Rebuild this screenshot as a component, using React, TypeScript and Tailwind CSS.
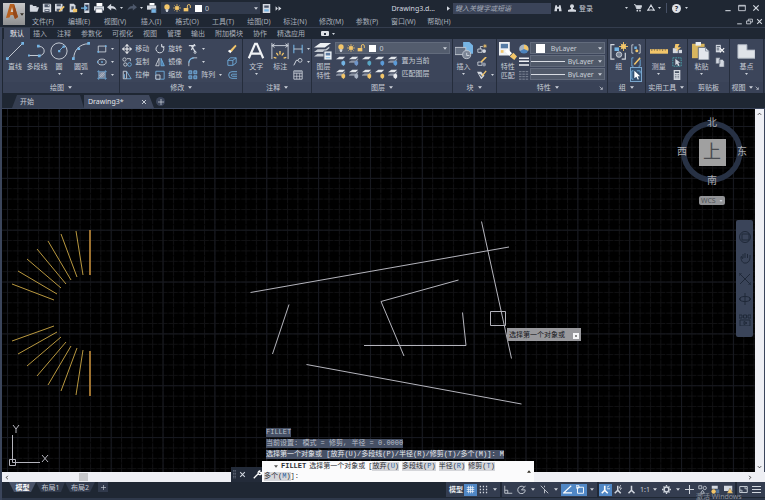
import { ReactNode } from 'react';

const W = '#d3d8e0';
const B = '#74b4e4';
const Y = '#f3c66a';
const G = '#8d95a5';

// Small icons are drawn on a 12 x 12 grid
const icons: Record<string, ReactNode> = {
    open: <><path d="M1 10V2h3l1 1.500h4V5" fill={W} /><path d="M1 10.500 3 5h9l-2 5.500z" fill={W} /></>,
    save: <><path d="M1 1h9l1 1v9H1z" fill={W} /><path d="M3 1.500h6V5H3zM3 7.500h6V11H3z" fill="#4b5567" /><path d="M7 2h1.300v2H7zM4 8.500h4v1H4z" fill={W} /></>,
    saveAs: <><path d="M0 1h9v9H0z" fill={W} /><path d="M2 1.500h5V4H2zM2 7h4v3H2z" fill="#4b5567" /><path d="m5 10 6-6" stroke={Y} strokeWidth="2" /></>,
    page: <><path d="M2 1h5l2 2v8H2z" fill={W} /><path d="M4 4h3v4H4z" fill="#4b5567" /><path d="M6 7h5v4H6z" fill={Y} /></>,
    phone: <><path d="M4 0h6v12H4z" fill={W} /><path d="M5 2h4v7H5z" fill="#35405a" /><path d="M0 6h6M4 3.500 7 6 4 8.500" stroke={B} strokeWidth="1.500" /></>,
    print: <><path d="M3 0h7v4H3z" fill="#fff" /><path d="M0 4h12v5H0z" fill={W} /><path d="M2 7h8v5H2z" fill="#fff" stroke="#4b5567" strokeWidth=".7" /></>,
    plot: <><path d="M3 0h6v3H3z" fill="#fff" /><path d="M0 3h11v5H0z" fill={W} /><path d="M5 7h6v5H5z" fill={B} stroke="#4b5567" strokeWidth=".7" /></>,
    undo: <path d="M0 5 5 1v2.500c4 0 6 2 6.500 5.500C10 7 8 6.500 5 6.500V9z" fill={W} />,
    redo: <path d="M12 5 7 1v2.500C3 3.500 1 5.500.5 9 2 7 4 6.500 7 6.500V9z" fill="#4d586b" />,
    bulb: <><circle cx="6" cy="4.500" r="4" fill={Y} /><path d="M4 8h4v1.500L7 12H5L4 10z" fill={W} /></>,
    sun: <><circle cx="6" cy="6" r="3" fill={Y} /><path d="M6 0v12M0 6h12M2 2l8 8M10 2l-8 8" stroke={Y} /></>,
    unlock: <><path d="M1 6h7v5H1z" fill={Y} /><path d="M6.500 6V3a2 2 0 0 1 4.500 0v3" stroke={Y} strokeWidth="1.400" /></>,
    sheet: <><path d="M1 0h10v12H1z" fill={W} /><path d="M3 2h6v3H3z" fill="#4b5567" /><path d="M3 7h6v3H3z" fill={B} /></>,
    forward: <path d="m1 2 4 4-4 4zM6 2l5 4-5 4z" fill={W} />,
    find: <path d="M2 2h2.500v2h3V2H10l1.500 9h-4V7h-3v4H.5z" fill={W} />,
    user: <><circle cx="6" cy="3.500" r="3" fill={W} /><path d="M4.500 6h3v1.500L12 9v2.500H0V9l4.500-1.500z" fill={W} /></>,
    cart: <><path d="M0 1h2l2 6h6l1.500-4.500H3" stroke={W} strokeWidth="1.400" /><path d="M3 3h8L9.500 7H4z" fill={W} /><circle cx="5" cy="10" r="1.300" fill={W} /><circle cx="9" cy="10" r="1.300" fill={W} /></>,
    a360: <path d="M6 1.500 10.500 9h-9zM0 9.500h4M8 9.500h4M5 2h2" stroke={W} strokeWidth="1.600" />,
    min: <path d="M2 10h8" stroke={W} strokeWidth="1.600" />,
    max: <path d="M1 2h10v8H1zM1 3h10" stroke={W} strokeWidth="1.300" />,
    restore: <path d="M1 5h7v5H1zM4 5V2h7v5H8" stroke={W} strokeWidth="1.400" />,
    close: <path d="m2 2 8 8M10 2l-8 8" stroke={W} strokeWidth="1.800" />,
    rect: <><path d="M1.500 2.500h9v7h-9z" stroke={W} /><path d="M.5 8.500h2v2h-2zM9.500 1.500h2v2h-2z" fill={B} /></>,
    ellipse: <><ellipse cx="6" cy="6" rx="5" ry="3.500" stroke={W} /><path d="M5 5h2v2H5zM0 5h1.500v2H0z" fill={B} /></>,
    hatch: <><path d="M2 2h8v8H2z" fill="#7d879b" /><path d="M0 2h12M0 10h12M2 0v12M10 0v12" stroke={B} strokeWidth=".7" /><path d="m3 7 4-4M3 9l6-6M5 9l4-4" stroke={W} strokeWidth=".7" /></>,
    move: <path d="M6 1v10M1 6h10M4 3l2-2.500L8 3M4 9l2 2.500L8 9M3 4 .5 6 3 8M9 4l2.500 2L9 8" stroke="#fff" strokeWidth="1.200" />,
    copy: <><circle cx="3" cy="3" r="2" stroke={W} /><circle cx="9" cy="9" r="2.200" stroke={B} /><circle cx="4" cy="9" r="2" stroke={W} /><path d="M6 2h4v3" stroke={W} /></>,
    stretch: <><path d="M1.500 1.500h4v9h-4z" stroke={W} /><path d="M5.500 1.500 11 10.500H5.500" stroke={B} /><path d="M3 5v5" stroke={B} /></>,
    rotate: <path d="M8.500 2A4.700 4.700 0 1 1 4 1.600M8 0v3.500h3.500" stroke={W} strokeWidth="1.200" />,
    mirror: <><path d="M4.800 1.500v9H.8z" stroke={W} /><path d="M7.200 1.500v9h4z" stroke={B} fill="#4b7ba8" /></>,
    scale: <><path d="M1 1.500h10v9.500H1z" stroke={B} /><path d="M1 6h5v5H1z" stroke={W} fill="#3c455a" /></>,
    trim: <><path d="M1 2h8M8 0 4 7M4 2l5 8" stroke={W} strokeWidth="1.500" /><circle cx="8.500" cy="10" r="1.300" stroke={W} /></>,
    fillet: <><path d="M1 11V7a6 6 0 0 1 6-6h4" stroke={W} /><path d="M1 7a6 6 0 0 1 6-6" stroke={B} strokeWidth="1.300" /></>,
    array: <path d="M1 1h3.500v3.500H1zM7 1h3.500v3.500H7zM1 7h3.500v3.500H1zM7 7h3.500v3.500H7z" stroke={B} fill="#56749a" />,
    erase: <><path d="m3 8 7-7 1.500 1.500-6 7z" fill={Y} /><path d="M1 8.500 3.500 7l2 2L4 11z" fill="#fff" /></>,
    explode: <path d="M1 4h6v6H1zM4 1h7v6M1 4l3-3M7 4l4-3M7 10l4-3" stroke={B} />,
    offset: <path d="M12 2H6a4 4 0 0 0 0 8h6M12 5H6.500a1.200 1.200 0 0 0 0 2.500H12" stroke={B} />,
    linear: <><path d="M1 1v10M11 1v10" stroke={B} strokeWidth="1.300" /><path d="M1 6h10" stroke={W} /></>,
    leader: <><path d="m1 10 3-6h2" stroke={W} strokeWidth="1.200" /><circle cx="8.500" cy="4" r="2.300" stroke={W} /></>,
    table: <><path d="M1 1h10v10H1z" stroke={W} /><path d="M1 4h10M1 7.500h10M4.500 4v7M8 4v7" stroke={W} strokeWidth=".8" /><path d="M1 1h10v2H1z" fill={G} /></>,
    blocks: <><path d="M1 10h5V6H1zM4 6V3h3" stroke={W} /><circle cx="8.500" cy="8.500" r="2.300" fill={W} /><path d="M9.500 0v5M7 2.500h5M8 1l3 3M11 1 8 4" stroke={Y} strokeWidth=".8" /></>,
    blockEdit: <><path d="M1 10h5V6H1z" stroke={W} /><circle cx="8.500" cy="9" r="2.300" fill={G} /><path d="m5 6 6-6" stroke={Y} strokeWidth="2" /></>,
    attr: <><path d="M0 2h5l4 5-4 4z" fill={W} /><path d="m3 5 3 3" stroke="#4b5567" strokeWidth="1.300" /><path d="m6 7 5-6" stroke={Y} strokeWidth="1.700" /></>,
    wheel: <><circle cx="6" cy="6" r="5.500" fill="#4c83bd" /><path d="M6 6V.5A5.500 5.500 0 0 1 11 8z" fill={Y} /><path d="M6 6 1 8.500A5.500 5.500 0 0 1 6 .5z" fill="#a9b5c2" /></>,
    weights: <path d="M0 1.500h12M0 5h12M0 9.500h12" stroke="#eef1f5" strokeWidth="1.900" />,
    types: <path d="M0 2h12M0 5h12M0 8h12M0 11h12" stroke={G} strokeDasharray="3 1" />,
    ungroup: <><path d="M3 1H1v10h2M9 1h2v10H9" stroke={W} /><path d="M4 3h3v3H4z" fill={B} /><circle cx="7" cy="8" r="1.800" fill={Y} /></>,
    groupEdit: <><path d="M3 1H1v10h2M9 3h2v8H9" stroke={B} /><path d="m4 9 7-8" stroke={Y} strokeWidth="1.800" /></>,
    pick: <><path d="M3 1H1v10h2M7 1h4v3" stroke={B} /><path d="M4 1v9l2.500-2L8 11.500 9.500 11 8 7.500h3z" fill="#fff" /></>,
    quick: <><path d="M1 5h6v6H1z" fill={W} /><path d="M4 0h5L7 4h4L5 9l1-4H3z" fill={Y} /><path d="M8 7h4v4H8z" fill={W} /></>,
    selAll: <><path d="M1 1h10v10H1z" stroke="#4fb3b8" strokeDasharray="2 1" /><path d="M4 2v8l2-2 1.500 3L9 10 7.500 7H10z" fill={W} /></>,
    calc: <><path d="M2 0h8v12H2z" fill={W} /><path d="M3.500 1.500h5v2h-5zM3.500 5h1v1h-1zM5.500 5h1v1h-1zM7.500 5h1v1h-1zM3.500 7h1v1h-1zM5.500 7h1v1h-1zM7.500 7h1v1h-1zM3.500 9h1v1h-1zM5.500 9h1v1h-1zM7.500 9h1v1h-1z" fill="#4b5567" /></>,
    cut: <><path d="M1 1h6v9H1z" fill={W} /><path d="m6 5 5 5M11 5l-5 5" stroke="#fff" strokeWidth="1.300" /><path d="M2 3h4M2 5h3M2 7h3" stroke="#4b5567" /></>,
    copyClip: <path d="M1 1h5v7H1zM5 3h4l2 2v7H5z" fill={W} stroke="#4b5567" strokeWidth=".6" />,
    grid: <path d="M1 3.500h10M1 8.500h10M3.500 1v10M8.500 1v10M6 1v10M1 6h10" stroke="#f2f6fb" strokeWidth="1" />,
    dots: <path d="M1 2h10M1 6h10M1 10h10" stroke={W} strokeWidth="1.700" strokeDasharray="1.700 2.400" />,
    ortho: <path d="M1 1v10h10M1 7h4v4" stroke={W} strokeWidth="1.100" />,
    polar: <path d="M9.500 3A5 5 0 1 0 11 7M6 6.500 11.500 1M6 6.500h5" stroke={W} strokeWidth="1.200" />,
    iso: <path d="m1 1 10 10M6 6v5M6 1v2" stroke={W} strokeWidth="1.100" />,
    otrack: <path d="M11 1 1 10.500h11" stroke="#fff" strokeWidth="1.400" />,
    osnap: <path d="M2 3h8v8H2zM0 1h4v3H0z" stroke="#fff" strokeWidth="1.200" />,
    anno: <><path d="M5 1v6L1 11M5 7l4 4" stroke="#fff" strokeWidth="2.200" /><path d="m8 3 3-2M8 5h4" stroke="#fff" /></>,
    anno2: <><path d="M5 1v6L1 11M5 7l4 4" stroke={W} strokeWidth="2" /><path d="M9 0 7 4h3L8 7" stroke={W} /></>,
    anno3: <path d="M6 1v6L2 11M6 7l4 4" stroke={W} strokeWidth="2" />,
    gear: <><circle cx="6" cy="6" r="3.200" stroke={W} strokeWidth="2" /><path d="M6 0v2M6 10v2M0 6h2M10 6h2M2 2l1 1M9 9l1 1M10 2 9 3M3 9l-1 1" stroke={W} strokeWidth="1.800" /></>,
    plus: <path d="M6 0v12M0 6h12" stroke={W} strokeWidth="1.400" />,
    isolate: <><path d="M1 1h4v4H1z" stroke={W} /><circle cx="9" cy="4" r="2.200" stroke={W} /><path d="m6 7 2.500 4h-5z" stroke={W} /></>,
    perf: <><path d="M1 1h8v4H1z" fill={W} /><circle cx="3.500" cy="8.500" r="3" fill={Y} /><path d="M7 6h4v5H7z" fill="#52749a" /></>,
    warn: <><path d="M0 1h11v7H0z" fill={W} /><path d="m8 4 4 7H4z" fill={Y} stroke="#4b5567" strokeWidth=".5" /></>,
    full: <path d="M1 2h10v8H1zM7 4h2.500v2M5 8H2.500V6" stroke={W} strokeWidth="1.200" />,
    menu: <path d="M0 2h12M0 6h12M0 10h12" stroke={W} strokeWidth="1.500" />,
    wrench: <path d="m1 11 6-6M7 5a3 3 0 0 1 2-4v2l1.500 1L12 3a3 3 0 0 1-4 3z" stroke="#fff" strokeWidth="1.700" />,
};

const Icon = ({ name, className = 'size-[10px]' }: { name: string; className?: string }) => (
    <svg viewBox="0 0 12 12" fill="none" className={`shrink-0 ${className}`} aria-hidden="true">{icons[name]}</svg>
);

const Caret = ({ className = 'h-[3px] w-[4px]' }: { className?: string }) => (
    <svg viewBox="0 0 6 4" className={`shrink-0 ${className}`} aria-hidden="true"><path d="M0 0h6L3 4z" fill="#cdd2da" /></svg>
);

// A stack of layers with a small badge that tells the commands apart
const LayerIcon = ({ badge, open }: { badge: string; open?: boolean }) => (
    <svg viewBox="0 0 12 12" className="size-[10px] shrink-0" aria-hidden="true">
        <path d="m0 4 4-3h7L8 4z" fill="#e1e5ea" />
        {!open && <path d="m0 7 3-1.500h5l3-3v2L8 8H0z" fill={G} />}
        <path d="M6.500 7 9 5.500 11 7v3l-2 2-2.500-2z" fill={badge} />
    </svg>
);

// Large ribbon icons use a 20 x 20 grid
const big: Record<string, ReactNode> = {
    line: <><path d="m2 18 16-16" stroke={W} /><path d="M0 17h3v3H0zM17 0h3v3h-3z" fill={B} /></>,
    pline: <><path d="M1 15h12a5 5 0 0 0 0-10h-1" stroke={W} /><path d="M0 14h2v2H0zM10 3h3v3h-3zM11 14h3v3h-3z" fill={B} /></>,
    circle: <><circle cx="10" cy="10" r="9" stroke={W} /><path d="m10 10 5-5" stroke={B} /><path d="M9 9h2.500v2.500H9zM14 4h2.500v2.500H14z" fill={B} /></>,
    arc: <><path d="M2 18C2 9 9 2 18 2" stroke={W} /><path d="M0 17h3v3H0zM17 0h3v3h-3zM6 6h3v3H6z" fill={B} /></>,
    text: <path d="m2 18 7-16h2l7 16M5 13h10" stroke="#f0f2f5" strokeWidth="2.400" />,
    dim: <><path d="M1 1v18M19 1v18M1 4h18M1 4l3-2M1 4l3 2M19 4l-3-2M19 4l-3 2" stroke={W} /><path d="M10 10v4M6 12l2 3M14 12l-2 3M3 17l3 1M17 17l-3 1" stroke={Y} strokeWidth="1.500" /></>,
    layers: <><path d="m0 6 7-5h12l-7 5z" fill="#edf0f3" /><path d="m0 11 4-3h9l4-3v2l-5 4zM0 16l4-3h9l4-3v2l-5 4z" fill="#c2c8d0" /><path d="M11 10h9v10h-9z" fill="#eef2f6" stroke="#435068" /><path d="M13 12h5v3h-5z" fill="#5f7da3" /><path d="M13 17.500h5" stroke={B} /></>,
    insert: <><path d="M9 0h7l4 4v9H9z" fill="#77b5e5" /><path d="M0 6h12v8H0z" fill="#677183" stroke="#c4cad3" /><circle cx="13" cy="14" r="4.500" fill="#7b8596" stroke="#c4cad3" /><path d="M13 12v3h3" stroke={W} /></>,
    match: <><path d="M0 0h12v15H0z" fill="#edf0f3" /><path d="M2 2h8v5H2z" fill="#557ba5" /><path d="M2 9h3v3H2z" fill={Y} /><path d="m8 9 5 5" stroke="#fff" strokeWidth="4" /><path d="m12 16 4-4 4 4-3 4z" fill={Y} /></>,
    group: <><path d="M5 3H1v16h4M13 19h4v-7" stroke={W} strokeWidth="1.300" /><path d="M5 6h5v4H5z" fill={B} /><circle cx="10" cy="14" r="3" fill="#7b8596" stroke={W} /><circle cx="15" cy="5" r="2.800" fill={Y} /><path d="M15 0v10M10 5h10M12 2l6 6M18 2l-6 6" stroke={Y} /></>,
    measure: <><path d="M0 8h20v5H0z" fill={Y} /><path d="M2 8v2M5 8v1.500M8 8v2M11 8v1.500M14 8v2M17 8v1.500" stroke="#7e6b45" /></>,
    paste: <><path d="M0 2h14v16H0z" fill="#d9b65e" /><path d="M4 0h6v4H4z" fill="#e9edf1" /><path d="M7 6h8l4 4v10H7z" fill="#e3e7ec" stroke="#5c6678" /><path d="M15 6v4h4" stroke="#8b94a3" /></>,
    base: <path d="M1 3h10v6h9v9H1z" fill="#dfe3e8" stroke="#b1b8c3" />,
};

const BigButton = ({ icon, label, caret, width = 'w-[22px]' }: { icon: string; label: string; caret?: boolean; width?: string }) => (
    <button className={`flex shrink-0 flex-col items-center ${width}`}>
        <svg viewBox="0 0 20 20" fill="none" className="size-[18px]" aria-hidden="true">{big[icon]}</svg>
        <span className="mt-[2px] whitespace-pre text-center leading-[9px]">{label}</span>
        {caret && <Caret className="mt-[2px] h-[2px] w-[3px]" />}
    </button>
);

const Small = ({ icon, label, caret, active }: { icon: string; label?: string; caret?: boolean; active?: boolean }) => (
    <button aria-label={label ?? icon} className={`flex h-[13px] items-center gap-[3px] ${active ? 'bg-[#34506f] outline outline-[#7ba6cc]' : ''}`}>
        <Icon name={icon} />
        {label}
        {caret && <Caret className="ml-px h-[2px] w-[3px]" />}
    </button>
);

const Panel = ({ title, caret, corner, children }: { title: string; caret?: boolean; corner?: boolean; children: ReactNode }) => (
    <section className="flex min-w-0 flex-col border-r border-[#252d3c] bg-[#3c455a]">
        <div className="flex h-[43px] pt-[3px]">{children}</div>
        <div className="flex h-[11px] items-center bg-[#394257]">
            <h2 className="flex flex-1 items-center justify-center gap-1 whitespace-nowrap">{title}{caret && <Caret />}</h2>
            {corner && <svg viewBox="0 0 6 6" className="mr-1 size-[4px]" aria-hidden="true"><path d="m1 1 4 4V2M5 5H2" stroke={W} fill="none" /></svg>}
        </div>
    </section>
);

const LayerState = () => (
    <span className="pointer-events-none flex items-center gap-[2px]">
        <Icon name="bulb" className="size-[8px]" />
        <Icon name="sun" className="size-[8px]" />
        <Icon name="unlock" className="size-[8px]" />
        <i className="ml-[2px] size-[7px] bg-white" />
    </span>
);

const Picker = ({ label, value, lead, className }: { label: string; value: string; lead: ReactNode; className: string }) => (
    <label className={`flex items-center gap-[3px] ${className}`}>
        {lead}
        <select aria-label={label} className="min-w-0 flex-1 appearance-none bg-transparent outline-none">
            <option>{value}</option>
        </select>
        <Caret className="mr-[2px] h-[3px] w-[4px]" />
    </label>
);

const TitleBar = () => (
    <div className="flex h-4 items-center">
        <div className="flex items-center gap-[3px] pl-1">
            {['open', 'save', 'saveAs', 'page', 'phone', 'print', 'undo'].map((n) => (
                <button key={n} aria-label={n} className="flex"><Icon name={n} /></button>
            ))}
            <Caret className="h-[2px] w-[3px]" />
            <button aria-label="redo" className="ml-px flex"><Icon name="redo" /></button>
            <Caret className="h-[2px] w-[3px]" />
            <button aria-label="plot" className="ml-px flex"><Icon name="plot" /></button>
        </div>
        <Picker label="图层" value="0" className="ml-1 h-[12px] w-[99px] bg-[#323b4d] pl-[2px]" lead={<LayerState />} />
        <button aria-label="sheet" className="ml-[2px] flex"><Icon name="sheet" className="size-[9px]" /></button>
        <button aria-label="more" className="ml-1 flex"><Icon name="forward" className="size-[7px]" /></button>
        <div className="flex flex-1 items-center justify-end text-[#d5d9e0]">
            <h1>Drawing3.d...</h1>
            <svg viewBox="0 0 4 6" className="mr-[3px] ml-3 h-[5px] w-[3px]" aria-hidden="true"><path d="m0 0 4 3-4 3z" fill={W} /></svg>
        </div>
        <input type="search" aria-label="搜索" placeholder="键入关键字或短语" className="h-[11px] w-[98px] bg-[#3b4459] px-[2px] italic outline-none placeholder:text-[#a4abb8]" />
        <button aria-label="查找" className="ml-[3px] flex"><Icon name="find" className="size-[8px]" /></button>
        <button className="ml-[6px] flex items-center gap-[3px]"><Icon name="user" className="size-[8px]" />登录</button>
        <Caret className="ml-8 h-[2px] w-[3px]" />
        <button aria-label="cart" className="ml-[6px] flex"><Icon name="cart" className="size-[8px]" /></button>
        <button aria-label="A360" className="ml-[5px] flex"><Icon name="a360" className="size-[8px]" /></button>
        <Caret className="ml-[3px] h-[2px] w-[3px]" />
        <i className="ml-[5px] h-[10px] w-px bg-[#465065]" />
        <button aria-label="帮助" className="ml-[5px] flex size-[9px] items-center justify-center rounded-full bg-[#dde1e7] font-bold text-[#1f2733]">?</button>
        <Caret className="ml-[4px] h-[2px] w-[3px]" />
        <div className="ml-9 flex gap-[6px] pr-[5px]">
            {['min', 'max', 'close'].map((n) => <button key={n} aria-label={n} className="flex"><Icon name={n} className="size-[8px]" /></button>)}
        </div>
    </div>
);

const menus = ['文件(F)', '编辑(E)', '视图(V)', '插入(I)', '格式(O)', '工具(T)', '绘图(D)', '标注(N)', '修改(M)', '参数(P)', '窗口(W)', '帮助(H)'];
const tabs = ['插入', '注释', '参数化', '可视化', '视图', '管理', '输出', '附加模块', '协作', '精选应用'];

const Ribbon = () => (
    <div className="grid shrink-0 grid-cols-[117fr_123fr_69fr_140fr_44fr_111fr_38fr_42fr_42fr_34fr] overflow-hidden border-r border-[#2f384a] pl-px">
        <Panel title="绘图" caret>
            <div className="flex pl-px">
                <BigButton icon="line" label="直线" />
                <BigButton icon="pline" label="多段线" />
                <BigButton icon="circle" label="圆" caret />
                <BigButton icon="arc" label="圆弧" caret />
            </div>
            <div className="ml-[5px]">
                <Small icon="rect" caret />
                <Small icon="ellipse" caret />
                <Small icon="hatch" caret />
            </div>
        </Panel>
        <Panel title="修改" caret>
            <div className="ml-[2px] w-[33px]">
                <Small icon="move" label="移动" />
                <Small icon="copy" label="复制" />
                <Small icon="stretch" label="拉伸" />
            </div>
            <div className="w-[33px]">
                <Small icon="rotate" label="旋转" />
                <Small icon="mirror" label="镜像" />
                <Small icon="scale" label="缩放" />
            </div>
            <div className="w-[39px]">
                <Small icon="trim" caret />
                <Small icon="fillet" caret />
                <Small icon="array" label="阵列" caret />
            </div>
            <div>
                <Small icon="erase" />
                <Small icon="explode" />
                <Small icon="offset" />
            </div>
        </Panel>
        <Panel title="注释" caret>
            <div className="flex pl-[2px]">
                <BigButton icon="text" label="文字" caret />
                <BigButton icon="dim" label="标注" width="w-[26px]" />
            </div>
            <div>
                <Small icon="linear" caret />
                <Small icon="leader" caret />
                <Small icon="table" />
            </div>
        </Panel>
        <Panel title="图层" caret>
            <BigButton icon="layers" label={'图层\n特性'} />
            <div className="flex min-w-0 flex-1 flex-col pl-px">
                <Picker label="当前图层" value="0" className="mr-[2px] h-[12px] border border-[#626b7c] bg-[#535c6d] pl-px" lead={<LayerState />} />
                <div className="flex h-[13px] items-center gap-[3px] pl-px">
                    <LayerIcon badge={B} open /><LayerIcon badge="#6f95c9" /><LayerIcon badge="#58a6c4" open /><LayerIcon badge="#5b9bd8" open /><LayerIcon badge="#5b9bd8" />
                    <button>置为当前</button>
                </div>
                <div className="flex h-[13px] items-center gap-[3px] pl-px">
                    <LayerIcon badge={Y} /><LayerIcon badge="#a9b3c4" /><LayerIcon badge={Y} /><LayerIcon badge={Y} open /><LayerIcon badge="#e8ebef" />
                    <button>匹配图层</button>
                </div>
            </div>
        </Panel>
        <Panel title="块" caret>
            <BigButton icon="insert" label="插入" caret />
            <div className="pl-[2px]">
                <Small icon="blocks" />
                <Small icon="blockEdit" />
                <Small icon="attr" caret />
            </div>
        </Panel>
        <Panel title="特性" caret corner>
            <BigButton icon="match" label={'特性\n匹配'} />
            <div>
                <Small icon="wheel" />
                <Small icon="weights" />
                <Small icon="types" />
            </div>
            <div className="mr-[2px] ml-px flex min-w-0 flex-1 flex-col gap-px">
                <Picker label="颜色" value="ByLayer" className="h-[12px] border border-[#626b7c] bg-[#505969]" lead={<i className="mr-[3px] ml-[5px] size-[9px] bg-white" />} />
                <Picker label="线宽" value="ByLayer" className="h-[12px] border border-[#626b7c] bg-[#505969]" lead={<i className="h-px w-[34px] bg-[#d8dce3]" />} />
                <Picker label="线型" value="ByLayer" className="h-[12px] border border-[#626b7c] bg-[#505969]" lead={<i className="h-px w-[34px] bg-[#d8dce3]" />} />
            </div>
        </Panel>
        <Panel title="组" caret>
            <BigButton icon="group" label="组" />
            <div className="pl-px">
                <Small icon="ungroup" />
                <Small icon="groupEdit" />
                <Small icon="pick" active />
            </div>
        </Panel>
        <Panel title="实用工具" caret>
            <BigButton icon="measure" label="测量" caret width="w-[26px]" />
            <div>
                <Small icon="quick" />
                <Small icon="selAll" />
                <Small icon="calc" />
            </div>
        </Panel>
        <Panel title="剪贴板">
            <BigButton icon="paste" label="粘贴" caret width="w-[27px]" />
            <div>
                <Small icon="cut" />
                <Small icon="copyClip" />
            </div>
        </Panel>
        <Panel title="视图" caret corner>
            <BigButton icon="base" label="基点" caret width="w-full" />
        </Panel>
    </div>
);

const rays = [
    [76, 231, 83, 275], [61, 234, 77, 277], [48, 241, 71, 280], [37, 249, 66, 284], [27, 259, 61, 288], [18, 271, 57, 294], [12, 284, 54, 300],
    [12, 341, 54, 326], [18, 354, 57, 332], [27, 366, 61, 337], [37, 376, 66, 342], [48, 385, 71, 346], [61, 391, 77, 348], [76, 395, 83, 350],
];

const Drawing = () => (
    <svg className="absolute inset-0 h-full w-full" aria-label="图形">
        <defs>
            <pattern id="minor" width="10.370" height="10.370" patternUnits="userSpaceOnUse" x="5" y="17">
                <path d="M.5 0v10.370M0 .5h10.370" stroke="#111113" strokeDasharray="5 1" />
            </pattern>
            <pattern id="major" width="51.850" height="51.850" patternUnits="userSpaceOnUse" x="5" y="17">
                <path d="M.5 0v51.850M0 .5h51.850" stroke="#171920" />
            </pattern>
        </defs>
        <rect width="100%" height="100%" fill="url(#minor)" />
        <rect width="100%" height="100%" fill="url(#major)" />
        <g transform="translate(-2 -109)" fill="none">
            <g stroke="#b9983f">
                {rays.map(([x1, y1, x2, y2]) => <line key={`${x1}-${y1}`} x1={x1} y1={y1} x2={x2} y2={y2} />)}
            </g>
            <path d="M90 230v45M90 351v45" stroke="#9c7130" strokeWidth="2" />
            <g stroke="#b4b4bc">
                <path d="m250.500 292.500 258.500-45.500M481.500 221.500l30 137M458.500 280 381 301.500l23 54.500M364 345.500h102l-3.500-33M289 304.500 272.500 354M306.500 364.500l215 39.500" />
                <path d="M490.500 311.500h15v14h-15z" />
                <path d="M12.500 435v27.500H40M9.500 459.500h6v6h-6zM13 425l3 4 3-4M16 429v4M42 455l6 7M48 455l-6 7" />
            </g>
            <circle cx="711.700" cy="151.700" r="28" stroke="#273144" strokeWidth="5.500" />
        </g>
    </svg>
);

const ViewCube = () => (
    <div className="absolute top-[8px] right-[8px] flex w-[70px] flex-col items-center font-['Liberation_Serif','Noto_Sans_CJK_SC',serif] text-[10px] text-[#a9abb0]">
        <button className="h-[12px]">北</button>
        <div className="flex h-[46px] w-full items-center justify-between">
            <button>西</button>
            <button className="size-[27px] bg-[#a0a0a0] text-[18px] text-[#4a4c50]">上</button>
            <button>东</button>
        </div>
        <button className="h-[12px]">南</button>
        <button className="mt-[9px] flex h-[9px] w-[26px] items-center gap-[3px] rounded-[2px] bg-[#929396] pl-[2px] font-['Noto_Sans',sans-serif] text-[7px] text-[#505358]">WCS<Caret className="h-[2px] w-[4px]" /></button>
    </div>
);

const NavBar = () => (
    <div className="absolute top-[111px] right-[2px] flex h-[117px] w-[17px] flex-col items-center justify-between rounded-[2px] bg-[#3a4459] py-[11px]">
        {[
            <><path d="M3 3h7v6H3z" /><circle cx="6" cy="6" r="5.500" /></>,
            <path d="M2 5c0 9 9 7 9 1V3M4 6V2M6 6V1M8.500 6V2M2 4l2 3" />,
            <path d="m1 1 10 10M11 1 1 11M0 3V0h3M9 12h3V9" />,
            <><path d="M6 0v12M2 4l-2 2 2 2M10 4l2 2-2 2" /><ellipse cx="6" cy="6" rx="5" ry="2.500" /></>,
            <path d="M0 1h3v3H0zM4.500 1h3v3h-3zM9 1h3v3H9zM1 6h10v6H1zM5 7.500v3L8 9z" />,
        ].map((shape, i) => (
            <button key={i} aria-label={`导航 ${i + 1}`} className="flex">
                <svg viewBox="0 0 12 12" className="size-[12px]" fill="none" stroke="#1f2838" aria-hidden="true">{shape}</svg>
            </button>
        ))}
    </div>
);

const Key = ({ text, k }: { text: string; k: string }) => (
    <button className="bg-[#d5d6da] leading-[9px]">{text}(<span className="text-[#2b5f9e]">{k}</span>)</button>
);

const CommandLine = () => (
    <div className="absolute bottom-0 left-[229px] z-10 flex items-end font-['Liberation_Mono','Noto_Sans_CJK_SC',monospace]">
        <div className="flex h-[15px] w-[31px] items-center gap-[3px] bg-[#232b39] pl-[2px]">
            <svg viewBox="0 0 4 12" className="h-[11px] w-[4px]" aria-hidden="true"><path d="M1 0v12M3 0v12" stroke="#9aa2b0" strokeDasharray="1 1" /></svg>
            <button aria-label="关闭" className="flex"><Icon name="close" className="size-[7px]" /></button>
            <button aria-label="自定义" className="ml-1 flex"><Icon name="wrench" className="size-[9px]" /></button>
        </div>
        <div>
            <div className="mb-[2px] ml-1 flex flex-col items-start gap-[2px] leading-[9px] whitespace-pre text-[#b9bec8]">
                <p className="bg-[#465065]">FILLET</p>
                <p className="bg-[#465065]">当前设置: 模式 = 修剪, 半径 = 0.0000</p>
                <p className="bg-[#465065] text-[#e7e9ed]">选择第一个对象或 [放弃(U)/多段线(P)/半径(R)/修剪(T)/多个(M)]: M</p>
            </div>
            <div className="flex h-[21px] w-[272px] items-center bg-[#fbfbfc] pl-[2px] text-[#2c2f36]">
                <div className="flex flex-1 flex-wrap items-center gap-x-[3px] gap-y-px leading-[9px]">
                    <svg viewBox="0 0 6 4" className="ml-[10px] h-[3px] w-[4px]" aria-hidden="true"><path d="M0 0h6L3 4z" fill="#555" /></svg>
                    <b>FILLET</b>
                    <span>选择第一个对象或</span>
                    <span className="flex">[<Key text="放弃" k="U" /></span>
                    <Key text="多段线" k="P" />
                    <Key text="半径" k="R" />
                    <Key text="修剪" k="T" />
                    <span className="flex"><Key text="多个" k="M" />]:</span>
                </div>
                <button aria-label="历史记录" className="flex pr-[3px]"><Caret className="h-[3px] w-[4px] rotate-180 invert" /></button>
            </div>
        </div>
    </div>
);

const StatusButton = ({ icon, on, caret }: { icon: string; on?: boolean; caret?: boolean }) => (
    <>
        <button aria-label={icon} aria-pressed={on} className={`flex h-[12px] w-[13px] items-center justify-center ${on ? 'bg-[#5087c5]' : ''}`}>
            <Icon name={icon} className="size-[9px]" />
        </button>
        {caret && <Caret className="mx-[3px] h-[3px] w-[4px]" />}
    </>
);

const StatusBar = () => (
    <div className="flex h-[15px] items-center bg-[#343d50] px-[2px]">
        <button className="px-px font-bold text-[#e6e8ec]">模型</button>
        <StatusButton icon="grid" on />
        <StatusButton icon="dots" caret />
        <i className="h-full w-[2px] bg-[#202836]" />
        <StatusButton icon="ortho" />
        <StatusButton icon="polar" caret />
        <StatusButton icon="iso" caret />
        <StatusButton icon="otrack" on />
        <StatusButton icon="osnap" on caret />
        <i className="h-full w-[2px] bg-[#202836]" />
        <StatusButton icon="anno" on />
        <StatusButton icon="anno2" />
        <StatusButton icon="anno3" />
        <button className="flex items-center gap-[3px] pl-[2px]">1:1<Caret className="mr-[3px] h-[3px] w-[4px]" /></button>
        <StatusButton icon="gear" caret />
        <StatusButton icon="plus" />
        <StatusButton icon="isolate" />
        <StatusButton icon="perf" />
        <StatusButton icon="warn" />
        <i className="h-full w-[2px] bg-[#202836]" />
        <StatusButton icon="full" />
        <StatusButton icon="menu" />
    </div>
);

const App = () => {
    return (
        <div className="relative flex h-screen flex-col overflow-hidden bg-[#1f2733] font-['Noto_Sans','Noto_Sans_CJK_SC',sans-serif] text-[7px] leading-none whitespace-nowrap text-[#c8cdd6]">
            {/* Title and menus */}
            <header className="flex h-[27px] shrink-0">
                <button aria-label="应用程序" className="mt-[3px] ml-[3px] flex h-[22px] w-[22px] bg-gradient-to-b from-[#c8c8c9] to-[#8f9091] pt-px pl-[3px]">
                    <svg viewBox="0 0 12 15" className="h-[15px] w-[12px]" aria-hidden="true">
                        <path d="M4 0h4l4 13-3 2-1.500-4H4.500L3.500 13.500 0 14z" fill="#b8611f" />
                        <path d="M6 3 4.700 8h2.600z" fill="#d3cdc8" />
                        <path d="M8 0 12 13l-3 2-2-5z" fill="#94481a" />
                    </svg>
                    <Caret className="mt-[9px] ml-[2px] h-[3px] w-[4px] invert" />
                </button>
                <div className="min-w-0 flex-1">
                    <TitleBar />
                    <nav className="flex h-[11px] items-center gap-3 pl-[6px] text-[#a9afba]">
                        {menus.map((m) => <button key={m} className="w-6">{m}</button>)}
                        <div className="ml-auto flex gap-[3px] pr-[2px]">
                            {['min', 'restore', 'close'].map((n) => <button key={n} aria-label={`图形 ${n}`} className="flex"><Icon name={n} className="size-[7px]" /></button>)}
                        </div>
                    </nav>
                </div>
            </header>

            <div className="flex min-h-0 flex-1 flex-col border-l-2 border-[#3b455b]">
                {/* Ribbon */}
                <div className="flex h-[12px] shrink-0 items-center gap-[10px] border-t border-[#343d4e] pl-[2px] text-[#a9afba]">
                    <button className="-mr-[7px] h-full bg-[#3c455a] px-[6px] text-[#eceef1]">默认</button>
                    {tabs.map((t) => <button key={t}>{t}</button>)}
                    <button aria-label="显示" className="ml-[6px] flex items-center gap-[3px]"><i className="flex h-[5px] w-[8px] items-center justify-center rounded-[1px] bg-[#dde0e5]"><i className="size-[2px] bg-[#2b3342]" /></i><Caret className="h-[2px] w-[3px]" /></button>
                </div>
                <Ribbon />

                {/* Open files */}
                <div className="flex h-4 shrink-0 items-end border-b border-[#3b455b] pl-[10px]">
                    <button className="h-[13px] w-[72px] bg-[#353e51] pl-2 text-left [clip-path:polygon(5px_0,68px_0,100%_100%,0_100%)]">开始</button>
                    <div className="flex h-[13px] w-[70px] items-center justify-between bg-[#3f485d] pr-[7px] pl-[4px] text-[#e3e6ea] [clip-path:polygon(0_0,65px_0,100%_100%,0_100%)]">
                        <button>Drawing3*</button>
                        <button aria-label="关闭图形" className="flex"><Icon name="close" className="size-[6px]" /></button>
                    </div>
                    <button aria-label="新图形" className="mb-[2px] ml-[2px] flex size-[9px] items-center justify-center rounded-full bg-[#3b455b]"><Icon name="plus" className="size-[6px]" /></button>
                </div>

                {/* Model space */}
                <main className="relative flex min-h-0 flex-1 flex-col">
                    <div className="flex min-h-0 flex-1">
                        <div className="relative flex-1 overflow-hidden bg-black">
                            <Drawing />
                            <ViewCube />
                            <NavBar />
                            <div className="absolute top-[219px] left-[505px] flex h-[13px] w-[74px] items-center justify-between bg-[#98989c] px-[2px] text-[#15161a]">
                                选择第一个对象或
                                <i className="mt-[3px] flex size-[6px] items-center justify-center bg-[#f4f4f6]"><i className="size-[2px] bg-[#888]" /></i>
                            </div>
                        </div>
                        <div className="flex w-[10px] flex-col items-center justify-between border-r border-[#3b455b] bg-[#eeeff4] py-[3px]">
                            <svg viewBox="0 0 6 4" className="h-[4px] w-[5px]" aria-hidden="true"><path d="m1 3 2-2 2 2" stroke="#333" fill="none" /></svg>
                            <svg viewBox="0 0 6 4" className="h-[4px] w-[5px]" aria-hidden="true"><path d="m1 1 2 2 2-2" stroke="#333" fill="none" /></svg>
                        </div>
                    </div>
                    <div className="flex h-[10px] items-center bg-[#eeeff4] pr-[13px] pl-[3px]">
                        <svg viewBox="0 0 4 6" className="h-[5px] w-[4px]" aria-hidden="true"><path d="M3 1 1 3l2 2" stroke="#222" fill="none" /></svg>
                        <i className="ml-[70px] h-[8px] w-[9px] bg-[#c6c7ca]" />
                        <svg viewBox="0 0 4 6" className="ml-auto h-[5px] w-[4px]" aria-hidden="true"><path d="m1 1 2 2-2 2" stroke="#222" fill="none" /></svg>
                    </div>
                    <CommandLine />
                </main>

                {/* Layouts and status */}
                <footer className="flex h-[18px] shrink-0 items-start justify-between border-b-2 border-[#2e384a]">
                    <div className="flex h-[10px] pl-[7px]">
                        <button className="w-[27px] bg-[#4a546a] font-bold text-white [clip-path:polygon(0_0,100%_0,22px_100%,5px_100%)]">模型</button>
                        <button className="w-[29px] bg-[#313a4c] [clip-path:polygon(0_0,100%_0,25px_100%,5px_100%)]">布局1</button>
                        <button className="w-[30px] bg-[#313a4c] [clip-path:polygon(0_0,100%_0,25px_100%,5px_100%)]">布局2</button>
                        <button aria-label="新建布局" className="ml-[3px] flex w-[10px] items-center justify-center bg-[#313a4c]"><Icon name="plus" className="size-[5px]" /></button>
                    </div>
                    <StatusBar />
                </footer>
            </div>
            <p className="pointer-events-none absolute bottom-0 left-[696px] text-[#8b919c]">激活 Windows</p>
        </div>
    )
}

export default App
